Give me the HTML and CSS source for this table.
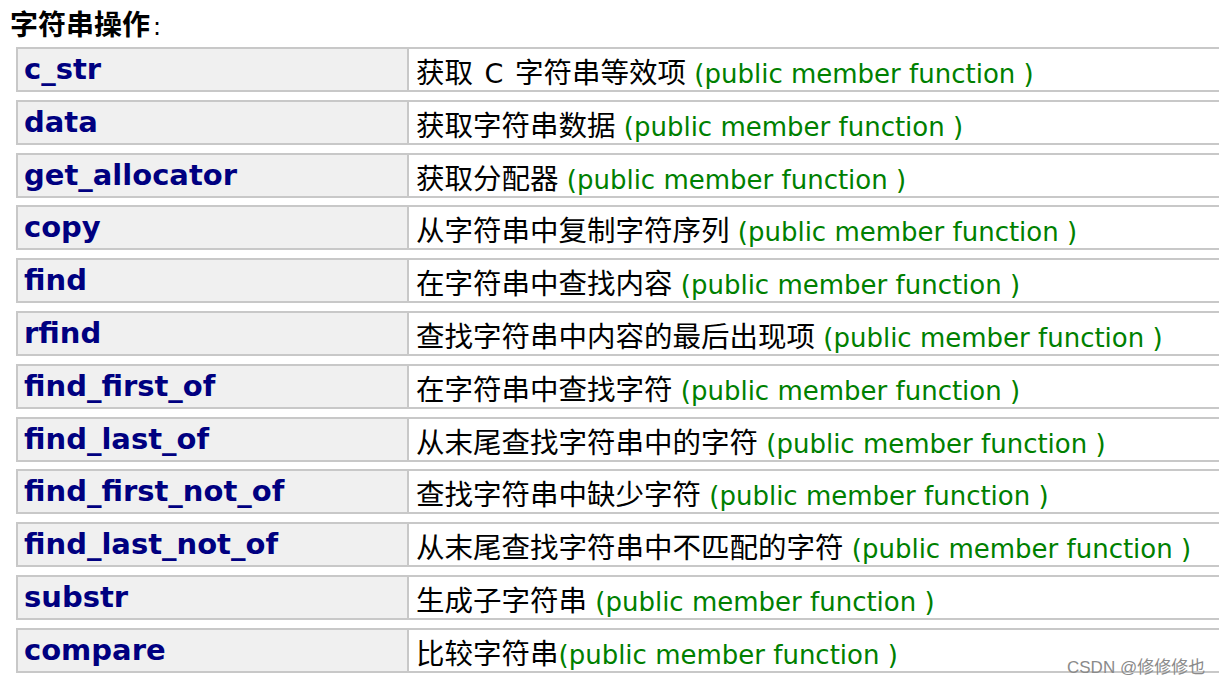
FILE: index.html
```html
<!DOCTYPE html>
<html lang="zh">
<head>
<meta charset="utf-8">
<title>字符串操作</title>
<link rel="stylesheet" href="styles.css">
</head>
<body>
<div class="page">
  <h2 class="title">字符串操作<span class="colon">:</span></h2>
  <div class="list">
    <div class="row"><div class="name">c_str</div><div class="desc"><span class="zh">获取<span class="lat"> C </span>字符串等效项</span> <span class="tag">(public member function )</span></div></div>
    <div class="row"><div class="name">data</div><div class="desc"><span class="zh">获取字符串数据</span> <span class="tag">(public member function )</span></div></div>
    <div class="row"><div class="name">get_allocator</div><div class="desc"><span class="zh">获取分配器</span> <span class="tag">(public member function )</span></div></div>
    <div class="row"><div class="name">copy</div><div class="desc"><span class="zh">从字符串中复制字符序列</span> <span class="tag">(public member function )</span></div></div>
    <div class="row"><div class="name">find</div><div class="desc"><span class="zh">在字符串中查找内容</span> <span class="tag">(public member function )</span></div></div>
    <div class="row"><div class="name">rfind</div><div class="desc"><span class="zh">查找字符串中内容的最后出现项</span> <span class="tag">(public member function )</span></div></div>
    <div class="row"><div class="name">find_first_of</div><div class="desc"><span class="zh">在字符串中查找字符</span> <span class="tag">(public member function )</span></div></div>
    <div class="row"><div class="name">find_last_of</div><div class="desc"><span class="zh">从末尾查找字符串中的字符</span> <span class="tag">(public member function )</span></div></div>
    <div class="row"><div class="name">find_first_not_of</div><div class="desc"><span class="zh">查找字符串中缺少字符</span> <span class="tag">(public member function )</span></div></div>
    <div class="row"><div class="name">find_last_not_of</div><div class="desc"><span class="zh">从末尾查找字符串中不匹配的字符</span> <span class="tag">(public member function )</span></div></div>
    <div class="row"><div class="name">substr</div><div class="desc"><span class="zh">生成子字符串</span> <span class="tag">(public member function )</span></div></div>
    <div class="row"><div class="name">compare</div><div class="desc"><span class="zh">比较字符串</span><span class="tag">(public member function )</span></div></div>
  </div>
  <div class="watermark">CSDN @修修修也</div>
</div>
</body>
</html>
```

FILE: styles.css
```css
html, body {
  margin: 0;
  padding: 0;
  background: #ffffff;
  overflow: hidden;
}

.page {
  position: relative;
  width: 1219px;
  height: 689px;
  overflow: hidden;
  font-family: "DejaVu Sans", "Noto Sans CJK SC", sans-serif;
}

.title {
  margin: 0;
  padding: 4px 0 0 10px;
  height: 43px;
  box-sizing: content-box;
  font-family: "Noto Sans CJK SC", sans-serif;
  font-weight: 700;
  font-size: 28px;
  line-height: 38px;
  color: #000000;
}

.colon {
  font-family: "DejaVu Sans", sans-serif;
  font-weight: 400;
  font-size: 24px;
  margin-left: 3px;
}

.list {
  display: flex;
  flex-direction: column;
  gap: 7.8px;
  margin-left: 16px;
  width: 1230px;
}

.row {
  display: flex;
  height: 45px;
}

.name {
  box-sizing: border-box;
  width: 392px;
  flex: none;
  background: #f0f0f0;
  border: 2px solid #c8c8c8;
  border-right: 1px solid #c8c8c8;
  padding: 2px 0 0 6px;
  font-family: "DejaVu Sans", sans-serif;
  font-weight: 700;
  font-size: 29px;
  line-height: 36px;
  color: #000080;
  white-space: nowrap;
}

.desc {
  box-sizing: border-box;
  flex: 1;
  background: #ffffff;
  border-top: 2px solid #c8c8c8;
  border-bottom: 2px solid #c8c8c8;
  border-left: 1px solid #c8c8c8;
  padding: 4px 0 0 7px;
  font-size: 26px;
  line-height: 36px;
  color: #000000;
  white-space: nowrap;
}

.zh {
  font-family: "Noto Sans CJK SC", sans-serif;
  font-size: 28.5px;
  color: #000000;
}

.lat {
  font-family: "DejaVu Sans", sans-serif;
  font-size: 27px;
  word-spacing: 3px;
}

.tag {
  font-family: "DejaVu Sans", sans-serif;
  font-size: 26px;
  color: #008000;
}

.watermark {
  position: absolute;
  left: 1067px;
  top: 657px;
  font-family: "Liberation Sans", "Noto Sans CJK SC", sans-serif;
  font-size: 17px;
  line-height: 22px;
  color: #8a8a8a;
  white-space: nowrap;
}
```
